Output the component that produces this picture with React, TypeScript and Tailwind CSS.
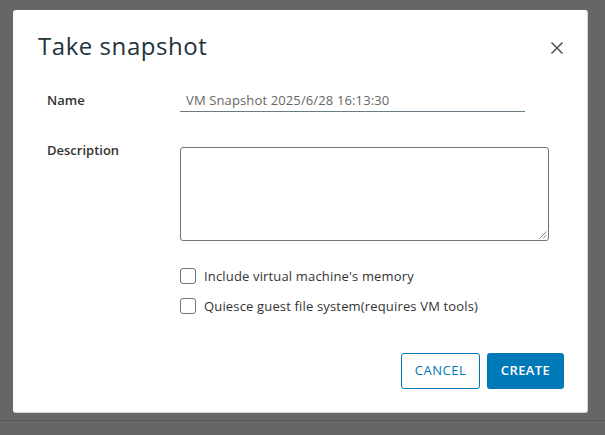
import React from "react";

export default function App() {
  return (
    <div className="relative w-[605px] h-[435px] bg-[#666666] overflow-hidden" style={{ fontFamily: "'Open Sans', 'Noto Sans', sans-serif" }}>
      <div className="absolute left-0 right-0 top-[420px] h-px bg-[#565656]" />
      <div className="absolute left-[13px] top-[10px] w-[575px] h-[403px] bg-white rounded-[3px] border-r border-b border-[#c9d6de] flex flex-col">
        <div className="flex items-start justify-between pl-[25px] pr-[22px] pt-[21px]">
          <h1 className="text-[24px] leading-[30px] text-[#21333b] tracking-[0.55px]">Take snapshot</h1>
          <button className="mt-[9px] w-[16px] h-[16px] flex items-center justify-center text-[#4a5a64]">
            <svg width="14" height="14" viewBox="0 0 14 14" fill="none" stroke="currentColor" strokeWidth="1.6">
              <path d="M1.5 1.5 L12.5 12.5 M12.5 1.5 L1.5 12.5" />
            </svg>
          </button>
        </div>
        <div className="pl-[34px] mt-[27px]">
          <div className="flex items-start">
            <label className="w-[133px] text-[13px] font-semibold text-[#333] leading-[18px] pt-[3px]">Name</label>
            <div className="w-[345px] h-[24px] border-b border-[#6a7a84] pl-[6px] text-[13px] text-[#666] leading-[18px] pt-[3px] tracking-[0.13px]">
              VM Snapshot 2025/6/28 16:13:30
            </div>
          </div>
          <div className="flex items-start mt-[29px]">
            <label className="w-[133px] text-[13px] font-semibold text-[#333] leading-[18px]">Description</label>
            <div className="relative mt-[6px] w-[369px] h-[94px] border border-[#737373] rounded-[3px]">
              <svg className="absolute right-[1px] bottom-[1px]" width="9" height="9" viewBox="0 0 9 9" stroke="#8a8a8a" strokeWidth="1">
                <path d="M8.5 1.5 L1.5 8.5 M8.5 5 L5 8.5" />
              </svg>
            </div>
          </div>
          <div className="ml-[133px] mt-[27px] flex flex-col gap-[14px]">
            <label className="flex items-center gap-[8px] text-[13px] text-[#333] leading-[16px] tracking-[0.16px]">
              <span className="w-[16px] h-[16px] border border-[#737373] rounded-[3px]" />
              Include virtual machine's memory
            </label>
            <label className="flex items-center gap-[8px] text-[13px] text-[#333] leading-[16px] tracking-[0.16px]">
              <span className="w-[16px] h-[16px] border border-[#737373] rounded-[3px]" />
              Quiesce guest file system(requires VM tools)
            </label>
          </div>
        </div>
        <div className="flex justify-end gap-[7px] pr-[23px] mt-[39px]">
          <button className="w-[79px] h-[36px] border border-[#0079b8] rounded-[3px] text-[#0079b8] text-[13px] tracking-[0.5px]">CANCEL</button>
          <button className="w-[77px] h-[36px] bg-[#0079b8] rounded-[3px] text-white text-[13px] font-semibold tracking-[0.4px]">CREATE</button>
        </div>
      </div>
    </div>
  );
}
